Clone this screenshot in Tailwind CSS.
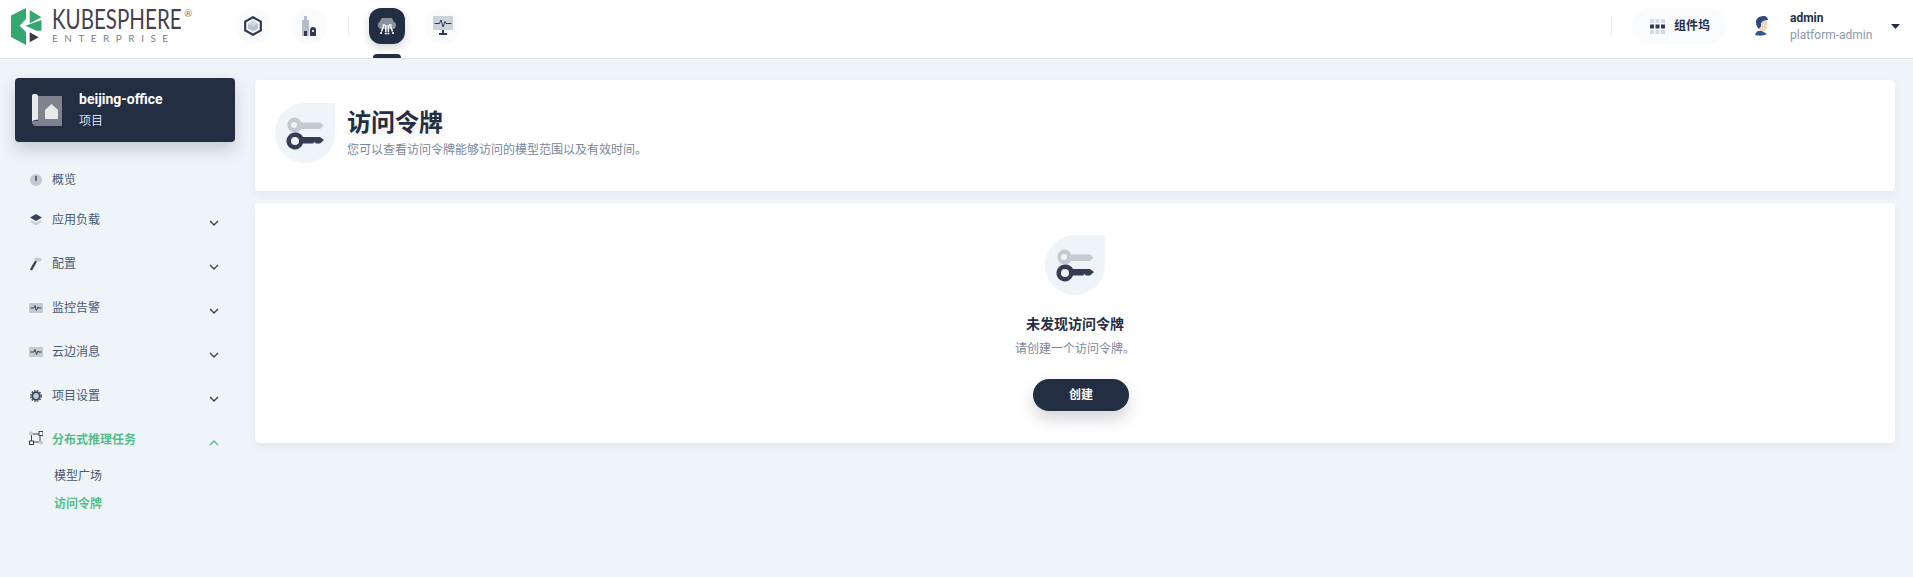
<!DOCTYPE html>
<html lang="zh">
<head>
<meta charset="utf-8">
<script src="https://cdn.jsdelivr.net/npm/@tailwindcss/browser@4"></script>
</head>
<body class="bg-[#eff4f9] font-['Roboto','Noto_Sans_CJK_SC',sans-serif] text-[#242e42]">
<div class="flex h-[577px] w-[1913px] flex-col overflow-hidden">
  <header class="relative flex h-[59px] shrink-0 items-start border-b border-[#dfe4ee] bg-white">
    <div class="ml-[11px] mt-[8px] flex w-[224px] shrink-0 items-start">
      <svg class="h-[37px] w-[31px] shrink-0" viewBox="0 0 31 37"><path d="M0 7.6 L15 0 V11 L8.7 17.7 L15 24 V37 L0 29 Z" fill="#33a96f"/><path d="M18.7 2 L30.5 9.3 L18.7 15.3 Z" fill="#33a96f"/><path d="M30.5 12 V22.7 H25.3 L14.3 17.7 Z" fill="#33a96f"/><path d="M18.7 24.3 L27.7 29.3 L18.7 34.3 Z" fill="#3b3a4a"/></svg>
      <div class="ml-[10px] flex w-[130px] flex-col items-start">
        <div class="mt-[-1px] h-[24px] w-fit origin-left scale-x-[0.79] whitespace-nowrap font-['Lato'] text-[26px] leading-[24px] text-[#473f4e]">KUBESPHERE</div>
        <div class="mt-[1px] whitespace-nowrap font-['Lato'] text-[10px] leading-[12px] tracking-[6.5px] text-[#7c7e87]">ENTERPRISE</div>
      </div>
      <div class="ml-[2px] mt-[-1px] font-['Lato'] text-[10px] leading-[12px] text-[#777]">®</div>
    </div>
    <div class="mt-[8px] flex items-center">
      <div class="flex h-[36px] w-[36px] items-center justify-center rounded-full bg-[#f9fbfd]">
        <svg class="h-[20px] w-[18px]" viewBox="0 0 18 20"><path d="M9 1.2 L16.8 5.6 V14.4 L9 18.8 L1.2 14.4 V5.6 Z" fill="none" stroke="#2f3a52" stroke-width="2.2"/><path d="M9 4.5 L14 7.5 V12.5 L9 15.5 L4 12.5 V7.5 Z" fill="#b9c2cf"/><path d="M4 7.5 L9 10 L14 7.5 L9 4.5Z" fill="#d5dbe3"/></svg>
      </div>
      <div class="ml-[20px] flex h-[36px] w-[36px] items-center justify-center rounded-full bg-[#f9fbfd]">
        <svg class="h-[20px] w-[14px]" viewBox="0 0 14 20"><path d="M0 4 H2 V0 H5 V4 H7 V20 H0 Z" fill="#b4bdc9"/><path d="M2 15 H5 V20 H2Z" fill="#2f3a52"/><path d="M8 14 A3 3 0 0 1 14 14 V20 H8Z" fill="#2f3a52"/><circle cx="11" cy="15" r="1.1" fill="#fff"/></svg>
      </div>
      <div class="ml-[21px] h-[20px] w-[1px] bg-[#e3e9ef]"></div>
      <div class="ml-[20px] flex h-[36px] w-[36px] items-center justify-center rounded-[12px] bg-[#242e42] shadow-[0_4px_8px_rgba(36,46,66,0.2)]">
        <svg class="h-[17px] w-[22px]" viewBox="0 0 22 17"><path d="M5 11 A4 4 0 0 1 4 3.5 A7 7 0 0 1 17.5 3.5 A4 4 0 0 1 17.5 11 Z" fill="#8b919f"/><g stroke="#fff" stroke-width="1.5" fill="none"><path d="M6.5 7 H8 L5.5 13.5"/><path d="M9.8 7 V14"/><path d="M12.4 7 V14"/><path d="M15.5 7 H14 L16.5 13.5"/></g><g fill="#fff"><circle cx="5" cy="15" r="1.1"/><circle cx="9.8" cy="15.5" r="1.1"/><circle cx="12.4" cy="15.5" r="1.1"/><circle cx="17" cy="15" r="1.1"/></g></svg>
      </div>
      <div class="ml-[20px] flex h-[36px] w-[36px] items-center justify-center rounded-full bg-[#f9fbfd]">
        <svg class="h-[20px] w-[20px]" viewBox="0 0 20 20"><rect y="0" width="20" height="14" fill="#ccd3db"/><path d="M1.5 7.5 H6.5 L8 4 L10 11 L12 5.5 L13 7.5 H18.5" fill="none" stroke="#2f3a52" stroke-width="1"/><path d="M9 14 H11 V17 H14 V19 H6 V17 H9Z" fill="#2f3a52"/></svg>
      </div>
    </div>
    <div class="absolute left-[373px] top-[54px] h-[4px] w-[28px] rounded-t-[4px] bg-[#242e42]"></div>
    <div class="ml-auto mt-[8px] flex items-center">
      <div class="h-[20px] w-[1px] bg-[#e3e9ef]"></div>
      <div class="ml-[20px] flex h-[36px] w-[94px] items-center rounded-full bg-[#f9fbfd] pl-[18px]">
        <svg class="h-[15px] w-[15px] shrink-0" viewBox="0 0 15 15"><g fill="#d5dbe3"><rect width="4" height="4"/><rect x="5.5" width="4" height="4"/><rect x="11" width="4" height="4"/><rect y="11" width="4" height="4"/><rect x="5.5" y="11" width="4" height="4"/><rect x="11" y="11" width="4" height="4"/></g><g fill="#2f3a52"><rect y="5.5" width="4" height="4"/><rect x="5.5" y="5.5" width="4" height="4"/><rect x="11" y="5.5" width="4" height="4"/></g></svg>
        <span class="ml-[9px] whitespace-nowrap text-[12px] font-bold leading-[16px]">组件坞</span>
      </div>
      <svg class="ml-[27px] h-[20px] w-[16px] shrink-0" viewBox="0 0 16 20"><path d="M2 19 C3 15 6 14 9 15 L14 18 C11 20 5 20 2 19Z" fill="#35588f"/><path d="M5 5 H14 V11 C14 14 11 16 9 15 C6 15 5 11 5 5Z" fill="#f3d5c3"/><path d="M3 6 C3 2 7 0 11 0 C13 0 15 2 15 4 C12 4 9 5 8 7 L8 10 L6 13 C4 11 3 9 3 6Z" fill="#2c4a7c"/></svg>
      <div class="ml-[21px] w-[96px]">
        <div class="text-[12px] font-bold leading-[16px]">admin</div>
        <div class="mt-[1px] text-[12px] leading-[16px] text-[#8c97ab]">platform-admin</div>
      </div>
      <svg class="ml-[5px] h-[5px] w-[9px] shrink-0" viewBox="0 0 9 5"><path d="M0 0 H9 L4.5 5Z" fill="#242e42"/></svg>
      <div class="w-[13px]"></div>
    </div>
  </header>

  <div class="flex min-h-0 flex-1">
    <aside class="w-[255px] shrink-0 pl-[15px] pt-[19px]">
      <div class="flex h-[64px] w-[220px] items-center rounded-[4px] bg-[#242e42] pl-[17px] shadow-[0_8px_16px_rgba(36,46,66,0.2)]">
        <svg class="h-[32px] w-[30px] shrink-0" viewBox="0 0 30 32"><path d="M6 2 H30 V32 H4 C1.5 32 0 30 0 28 V28 C2 26 6 27 6 27Z" fill="#7e838e"/><path d="M0 2 C0 0.5 1 0 2 0 H4 C5 0 6 1 6 2 V26 C4 25.5 1 26 0 28Z" fill="#e8e9eb"/><path d="M13 16 L19.5 10 L26 16 V25 H13Z" fill="#e8e9eb"/></svg>
        <div class="ml-[17px]">
          <div class="text-[14px] font-bold leading-[20px] text-white">beijing-office</div>
          <div class="mt-[2px] text-[12px] leading-[20px] text-[#d8dee5]">项目</div>
        </div>
      </div>
      <nav class="mt-[16px] w-[220px] text-[12px] text-[#4a5974]">
        <div class="flex h-[40px] items-center pl-[14px] pt-[3px]">
          <span class="flex w-[14px] shrink-0 justify-center"><svg class="h-[12px] w-[12px]" viewBox="0 0 12 12"><circle cx="6" cy="6" r="6" fill="#c1c9d1"/><path d="M5.3 2 H6.7 V6.5 A0.7 0.7 0 0 1 5.3 6.5Z" fill="#36435c"/></svg></span>
          <span class="ml-[9px] leading-[16px]">概览</span>
        </div>
        <div class="flex h-[44px] items-center pl-[14px]">
          <span class="flex w-[14px] shrink-0 justify-center"><svg class="h-[12px] w-[12px]" viewBox="0 0 12 12"><path d="M6 0 L12 3.5 L6 7 L0 3.5Z" fill="#36435c"/><path d="M1.5 6.5 L6 9 L10.5 6.5 L12 7.5 L6 11.5 L0 7.5Z" fill="#c1c9d1"/></svg></span>
          <span class="ml-[9px] leading-[16px]">应用负载</span>
          <svg class="ml-auto mr-[16px] mt-[6px] h-[6px] w-[10px]" viewBox="0 0 10 6"><path d="M1 1 L5 5 L9 1" fill="none" stroke="#36435c" stroke-width="1.4"/></svg>
        </div>
        <div class="flex h-[44px] items-center pl-[14px]">
          <span class="flex w-[14px] shrink-0 justify-center"><svg class="h-[14px] w-[12px]" viewBox="0 0 12 14"><path d="M1 13 L6 4" stroke="#36435c" stroke-width="2.4" fill="none"/><path d="M4 2 C6 0 9 0 12 2 L10 5 C9 4 8 4 7 5Z" fill="#c1c9d1"/></svg></span>
          <span class="ml-[9px] leading-[16px]">配置</span>
          <svg class="ml-auto mr-[16px] mt-[6px] h-[6px] w-[10px]" viewBox="0 0 10 6"><path d="M1 1 L5 5 L9 1" fill="none" stroke="#36435c" stroke-width="1.4"/></svg>
        </div>
        <div class="flex h-[44px] items-center pl-[14px]">
          <span class="flex w-[14px] shrink-0 justify-center"><svg class="h-[10px] w-[14px]" viewBox="0 0 14 10"><rect width="14" height="10" rx="1" fill="#c1c9d1"/><path d="M1.5 5 H5 L6 2.5 L7.5 7.5 L9 4 L9.7 5 H12.5" fill="none" stroke="#36435c"/></svg></span>
          <span class="ml-[9px] leading-[16px]">监控告警</span>
          <svg class="ml-auto mr-[16px] mt-[6px] h-[6px] w-[10px]" viewBox="0 0 10 6"><path d="M1 1 L5 5 L9 1" fill="none" stroke="#36435c" stroke-width="1.4"/></svg>
        </div>
        <div class="flex h-[44px] items-center pl-[14px]">
          <span class="flex w-[14px] shrink-0 justify-center"><svg class="h-[10px] w-[14px]" viewBox="0 0 14 10"><rect width="14" height="10" rx="1" fill="#c1c9d1"/><path d="M1.5 5 H5 L6 2.5 L7.5 7.5 L9 4 L9.7 5 H12.5" fill="none" stroke="#36435c"/></svg></span>
          <span class="ml-[9px] leading-[16px]">云边消息</span>
          <svg class="ml-auto mr-[16px] mt-[6px] h-[6px] w-[10px]" viewBox="0 0 10 6"><path d="M1 1 L5 5 L9 1" fill="none" stroke="#36435c" stroke-width="1.4"/></svg>
        </div>
        <div class="flex h-[44px] items-center pl-[14px]">
          <span class="flex w-[14px] shrink-0 justify-center"><svg class="h-[12px] w-[12px]" viewBox="0 0 12 12"><circle cx="6" cy="6" r="3.8" fill="#c1c9d1" stroke="#36435c" stroke-width="1.8"/><circle cx="6" cy="6" r="5.3" fill="none" stroke="#36435c" stroke-width="1.3" stroke-dasharray="1.6 1.2"/></svg></span>
          <span class="ml-[9px] leading-[16px]">项目设置</span>
          <svg class="ml-auto mr-[16px] mt-[6px] h-[6px] w-[10px]" viewBox="0 0 10 6"><path d="M1 1 L5 5 L9 1" fill="none" stroke="#36435c" stroke-width="1.4"/></svg>
        </div>
        <div class="flex h-[44px] items-center pl-[14px] font-bold text-[#55bc8a]">
          <span class="mt-[-4px] flex w-[14px] shrink-0 justify-center"><svg class="h-[14px] w-[14px]" viewBox="0 0 14 14"><path d="M3 3 H10 M11 4 V10 M10 11 H4 M2.5 3.5 V10" fill="none" stroke="#36435c"/><rect x="0" y="0.5" width="4" height="4" rx="2" fill="#c1c9d1"/><rect x="10" y="0.5" width="4" height="4" fill="#fff" stroke="#36435c"/><rect x="0.5" y="10" width="4" height="3.5" fill="#eff4f9" stroke="#36435c"/><circle cx="12" cy="11.5" r="2" fill="#c1c9d1"/></svg></span>
          <span class="ml-[9px] leading-[16px]">分布式推理任务</span>
          <svg class="ml-auto mr-[16px] mt-[6px] h-[6px] w-[10px]" viewBox="0 0 10 6"><path d="M1 5 L5 1 L9 5" fill="none" stroke="#55bc8a" stroke-width="1.4"/></svg>
        </div>
        <div class="flex h-[28px] items-center pl-[39px]">模型广场</div>
        <div class="flex h-[28px] items-center pl-[39px] font-bold text-[#55bc8a]">访问令牌</div>
      </nav>
    </aside>

    <main class="min-w-0 flex-1 pr-[18px] pt-[21px]">
      <section class="flex h-[111px] items-start rounded-[4px] bg-white pl-[20px] pt-[23px] shadow-[0_4px_8px_rgba(36,46,66,0.06)]">
        <div class="flex h-[60px] w-[60px] shrink-0 items-center justify-center rounded-[30px] rounded-tr-none bg-[#eff4f9]">
          <svg class="h-[60px] w-[60px]" viewBox="0 0 60 60"><path fill-rule="evenodd" d="M19 14.5 A7.5 7.5 0 0 1 26.2 19.5 H45 L48.5 22.5 L45 26 H26.2 A7.5 7.5 0 1 1 19 14.5Z M19 19 A3 3 0 1 0 19 25 A3 3 0 1 0 19 19Z" fill="#c4cad2"/><path fill-rule="evenodd" d="M20 29.5 A8.5 8.5 0 0 1 28 34 H45 L49 37 L45 40.5 H41 L39.5 39 L38 40.5 H28 A8.5 8.5 0 1 1 20 29.5Z M20 34 A4 4 0 1 0 20 42 A4 4 0 1 0 20 34Z" fill="#343d54"/></svg>
        </div>
        <div class="ml-[12px]">
          <h1 class="mt-[4px] text-[24px] font-bold leading-[32px] text-[#242e42] [text-shadow:0_4px_8px_rgba(36,46,66,0.1)]">访问令牌</h1>
          <p class="mt-[1px] text-[12px] leading-[20px] text-[#79879c]">您可以查看访问令牌能够访问的模型范围以及有效时间。</p>
        </div>
      </section>
      <section class="mt-[12px] flex h-[240px] flex-col items-center rounded-[4px] bg-white pt-[32px] shadow-[0_4px_8px_rgba(36,46,66,0.06)]">
        <div class="flex h-[60px] w-[60px] shrink-0 items-center justify-center rounded-[30px] rounded-tr-none bg-[#eff4f9]">
          <svg class="h-[60px] w-[60px]" viewBox="0 0 60 60"><path fill-rule="evenodd" d="M19 14.5 A7.5 7.5 0 0 1 26.2 19.5 H45 L48.5 22.5 L45 26 H26.2 A7.5 7.5 0 1 1 19 14.5Z M19 19 A3 3 0 1 0 19 25 A3 3 0 1 0 19 19Z" fill="#c4cad2"/><path fill-rule="evenodd" d="M20 29.5 A8.5 8.5 0 0 1 28 34 H45 L49 37 L45 40.5 H41 L39.5 39 L38 40.5 H28 A8.5 8.5 0 1 1 20 29.5Z M20 34 A4 4 0 1 0 20 42 A4 4 0 1 0 20 34Z" fill="#343d54"/></svg>
        </div>
        <div class="mt-[19px] text-[14px] font-bold leading-[20px] text-[#242e42]">未发现访问令牌</div>
        <div class="mt-[5px] text-[12px] leading-[20px] text-[#79879c]">请创建一个访问令牌。</div>
        <button class="ml-[12px] mt-[20px] h-[32px] w-[96px] rounded-full bg-[#242e42] text-[12px] font-bold text-white shadow-[0_8px_16px_rgba(36,46,66,0.2)]">创建</button>
      </section>
    </main>
  </div>
</div>
</body>
</html>
